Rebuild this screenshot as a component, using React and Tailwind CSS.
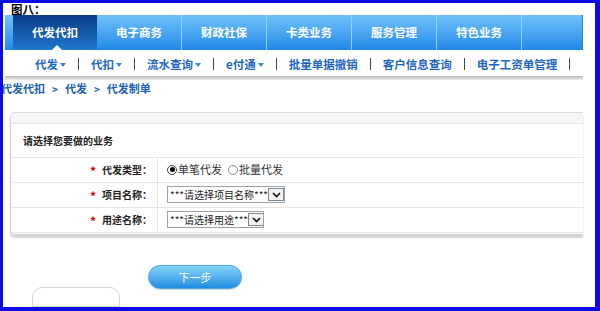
import React from "react";

function Arrow() {
  return (
    <svg width="6" height="4" viewBox="0 0 6 4" className="ml-[2px] mt-[2px]">
      <path d="M0 0 L6 0 L3 4 Z" fill="#3a86d6" />
    </svg>
  );
}

function Pipe() {
  return <span className="mx-[12px] w-[1px] h-[12px] bg-[#444] inline-block" />;
}

function Select({ text, width }) {
  return (
    <div
      className="h-[17px] border border-[#9aa3ad] bg-white flex items-center justify-between pl-[2px] pr-[1px] overflow-hidden"
      style={{ width }}
    >
      <span className="text-[10px] leading-[12px] text-[#222] whitespace-nowrap">{text}</span>
      <span className="shrink-0 w-[16px] h-[13px] border border-[#7d8894] bg-[#f3f3f3] flex items-center justify-center">
        <svg width="9" height="6" viewBox="0 0 9 6">
          <path d="M1 1 L4.5 4.5 L8 1" stroke="#111" strokeWidth="1.6" fill="none" />
        </svg>
      </span>
    </div>
  );
}

function Row({ label, children }) {
  return (
    <div className="h-[25px] flex border-b border-[#e6e6e6]">
      <div className="w-[147px] border-r border-[#e6e6e6] flex items-center justify-end pr-[5px]">
        <span className="text-[#e00000] text-[12px] font-bold mr-[6px] mt-[2px]">*</span>
        <span className="text-[10px] font-bold text-[#222]">{label}</span>
      </div>
      <div className="flex items-center pl-[9px]">{children}</div>
    </div>
  );
}

export default function App() {
  const tabs = ["代发代扣", "电子商务", "财政社保", "卡类业务", "服务管理", "特色业务"];
  const subs = [
    ["代发", true],
    ["代扣", true],
    ["流水查询", true],
    ["e付通", true],
    ["批量单据撤销", false],
    ["客户信息查询", false],
    ["电子工资单管理", false],
  ];
  return (
    <div className="w-[600px] h-[311px] bg-[#0b0be6] pt-[3px] pl-[3px] pr-[5px] pb-[4px]">
      <div className="w-full h-full bg-white overflow-hidden flex flex-col font-['Noto_Sans_CJK_SC','Liberation_Sans',sans-serif]">
        {/* header */}
        <div className="relative z-10 h-[12px] pl-[8px] text-[11.5px] leading-[12px] font-bold text-black whitespace-nowrap">图八：</div>

        {/* main nav */}
        <div className="ml-[2px] w-[578px] h-[37px] bg-gradient-to-b from-[#6fc2fb] to-[#1e88e6] flex pl-[8px] border-r border-[#2d86d4]">
          {tabs.map((t, i) =>
            i === 0 ? (
              <div
                key={t}
                className="relative w-[84px] h-full bg-gradient-to-b from-[#0b3a85] to-[#2079d0] flex items-center justify-center text-white font-bold text-[11.5px]"
              >
                {t}
                <span className="absolute bottom-0 left-[39px] w-0 h-0 border-l-[5px] border-r-[5px] border-b-[5px] border-l-transparent border-r-transparent border-b-white" />
              </div>
            ) : (
              <div
                key={t}
                className="w-[85px] h-full border-r border-[#8fd0fd] flex items-center justify-center text-white font-bold text-[11.5px]"
              >
                {t}
              </div>
            )
          )}
        </div>

        {/* sub nav */}
        <div className="ml-[2px] w-[578px] h-[28px] pt-[3px] pl-[30px] flex items-center bg-white">
          {subs.map(([s, arrow]) => (
            <React.Fragment key={s}>
              <span className="flex items-center text-[11.5px] font-bold text-[#1f66c4] whitespace-nowrap">
                {s}
                {arrow && <Arrow />}
              </span>
              <Pipe />
            </React.Fragment>
          ))}
        </div>
        <div className="ml-[2px] w-[578px] h-[4px] bg-gradient-to-b from-[#b9b9b9] to-[#ececec]" />

        {/* breadcrumb */}
        <div className="h-[18px] ml-[-2px] flex items-center gap-[7px] text-[11px] font-bold text-[#1d5fb3] whitespace-nowrap">
          <span>代发代扣</span>
          <span className="text-[10px]">&gt;</span>
          <span>代发</span>
          <span className="text-[10px]">&gt;</span>
          <span>代发制单</span>
        </div>

        {/* panel */}
        <div className="mt-[15px] ml-[7px] w-[573px] rounded-l-[5px] border-l border-t border-b border-[#d8d8d8] shadow-[0_3px_2px_rgba(0,0,0,0.18)] overflow-hidden bg-white">
          <div className="h-[11px] bg-[#f6f6f6] border-b border-[#e6e6e6]" />
          <div className="h-[34px] flex items-center pl-[12px] text-[10px] font-bold text-[#222] border-b border-[#e6e6e6]">
            请选择您要做的业务
          </div>
          <Row label="代发类型：">
            <span className="w-[10px] h-[10px] rounded-full border border-[#444] bg-white flex items-center justify-center">
              <span className="w-[5px] h-[5px] rounded-full bg-black" />
            </span>
            <span className="text-[11px] text-[#333] ml-[1px]">单笔代发</span>
            <span className="w-[10px] h-[10px] rounded-full border border-[#8a8a8a] bg-white ml-[6px]" />
            <span className="text-[11px] text-[#333] ml-[1px]">批量代发</span>
          </Row>
          <Row label="项目名称：">
            <Select text="***请选择项目名称***" width="118px" />
          </Row>
          <Row label="用途名称：">
            <Select text="***请选择用途***" width="97px" />
          </Row>
          <div className="h-[10px] bg-[#f4f4f4]" />
        </div>

        {/* bottom */}
        <div className="flex mt-[30px]">
          <div className="ml-[29px] mt-[22px] w-[88px] h-[20px] rounded-t-[10px] border border-[#d6d6d6] bg-white" />
          <div className="ml-[28px] w-[94px] h-[24px] rounded-full bg-gradient-to-b from-[#86d3f8] to-[#1a8de2] border border-[#4aa6e4] flex items-center justify-center text-white text-[11px] shadow-[0_1px_1px_rgba(0,0,0,0.15)]">
            下一步
          </div>
        </div>
      </div>
    </div>
  );
}
